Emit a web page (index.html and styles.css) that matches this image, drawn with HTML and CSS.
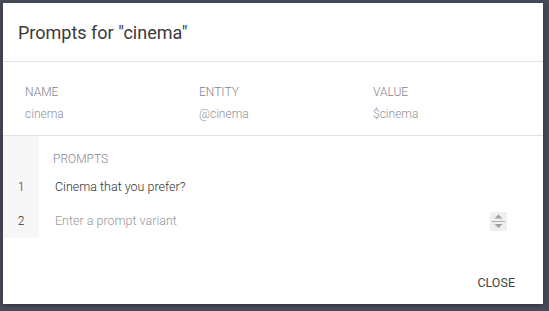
FILE: index.html
```html
<!DOCTYPE html>
<html lang="en">
<head>
  <meta charset="UTF-8" />
  <title>Prompts for "cinema"</title>
  <link rel="stylesheet" href="styles.css">
</head>
<body>
  <div class="dialog">
    <div class="dialog-header">Prompts for "cinema"</div>

    <div class="info">
      <div class="info-col">
        <div class="info-label">Name</div>
        <div class="info-value">cinema</div>
      </div>
      <div class="info-col">
        <div class="info-label">Entity</div>
        <div class="info-value">@cinema</div>
      </div>
      <div class="info-col">
        <div class="info-label">Value</div>
        <div class="info-value">$cinema</div>
      </div>
    </div>

    <div class="prompts">
      <div class="gutter">
        <div class="gutter-head"></div>
        <div class="gutter-num">1</div>
        <div class="gutter-num">2</div>
      </div>
      <div class="prompt-list">
        <div class="prompt-head">Prompts</div>
        <div class="prompt-row">Cinema that you prefer?</div>
        <div class="prompt-row placeholder">
          <span>Enter a prompt variant</span>
          <span class="spinner">
            <svg width="17" height="19" viewBox="0 0 17 19">
              <path d="M4.5 6.5 L8.5 2.5 L12.5 6.5 Z" fill="#a0a0a0"/>
              <rect x="2" y="9" width="13" height="1" fill="#b0b0b0"/>
              <path d="M4.5 12 L12.5 12 L8.5 16 Z" fill="#a0a0a0"/>
            </svg>
          </span>
        </div>
      </div>
    </div>

    <div class="dialog-footer">
      <button class="btn-close">Close</button>
    </div>
  </div>
</body>
</html>
```

FILE: styles.css
```css
body {
  margin: 0;
  padding: 3px;
  background: #464a59;
  font-family: Roboto, "Liberation Sans", sans-serif;
  color: #333;
}

.dialog {
  width: 540px;
  height: 301px;
  background: #ffffff;
  box-shadow: 0 2px 6px rgba(0,0,0,0.3);
  display: flex;
  flex-direction: column;
}

.dialog-header {
  height: 58px;
  line-height: 60px;
  padding-left: 15px;
  font-size: 18px;
  color: #3a3a3a;
  border-bottom: 1px solid #e2e2e2;
}

.info {
  display: flex;
  height: 74px;
  padding-left: 22px;
  border-bottom: 1px solid #e2e2e2;
  box-sizing: border-box;
  font-weight: 300;
}

.info-col {
  flex: none;
  width: 174px;
  padding-top: 23px;
}

.info-label {
  font-size: 12px;
  text-transform: uppercase;
  color: #80848f;
  line-height: 14px;
}

.info-value {
  font-size: 12px;
  color: #90939c;
  margin-top: 8px;
  line-height: 14px;
}

.prompts {
  display: flex;
  font-weight: 300;
}

.gutter {
  width: 36px;
  background: #f7f7f7;
  padding-top: 12px;
}

.gutter-head {
  height: 22px;
}

.gutter-num {
  height: 34px;
  line-height: 34px;
  text-align: center;
  font-size: 12px;
  color: #333;
}

.prompt-list {
  flex: 1;
  padding-top: 12px;
}

.prompt-head {
  height: 22px;
  line-height: 22px;
  padding-left: 14px;
  font-size: 12px;
  text-transform: uppercase;
  color: #858892;
}

.prompt-row {
  height: 34px;
  line-height: 34px;
  padding-left: 16px;
  font-size: 12.5px;
  color: #333;
  display: flex;
  align-items: center;
  justify-content: space-between;
}

.placeholder {
  color: #999;
}

.spinner {
  width: 17px;
  height: 19px;
  background: #efefef;
  margin-right: 36px;
  display: flex;
}

.dialog-footer {
  flex: 1;
  display: flex;
  justify-content: flex-end;
  align-items: center;
  padding-right: 28px;
  padding-top: 22px;
}

.btn-close {
  background: none;
  border: none;
  font-family: Roboto, "Liberation Sans", sans-serif;
  font-size: 12.5px;
  text-transform: uppercase;
  color: #444;
  padding: 0;
  cursor: pointer;
}
```
